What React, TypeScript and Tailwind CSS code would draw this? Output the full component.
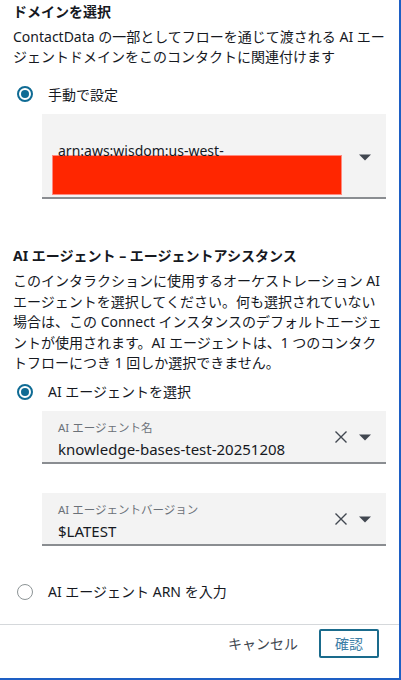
import React from "react";

const font = { fontFamily: '"Noto Sans", "Noto Sans CJK JP", sans-serif' };

function Radio({ checked, label }: { checked?: boolean; label: string }) {
  return (
    <div className="flex h-5 items-center">
      <span
        className={
          "ml-[4px] flex h-4 w-4 items-center justify-center rounded-full border-2 " +
          (checked ? "border-[#0f6b94]" : "border-[#8d9496] border-[1.5px]")
        }
      >
        {checked && <span className="h-[8px] w-[8px] rounded-full bg-[#0f6b94]" />}
      </span>
      <span className="ml-[15px] text-[14px] text-[#16191f]">{label}</span>
    </div>
  );
}

function Caret() {
  return (
    <svg width="12" height="8" viewBox="0 0 12 8" className="text-[#414750]">
      <path d="M0 1.5h12L6 7.5z" fill="currentColor" />
    </svg>
  );
}

function Clear() {
  return (
    <svg width="14" height="14" viewBox="0 0 14 14">
      <path d="M1.5 1.5l11 11M12.5 1.5l-11 11" stroke="#414750" strokeWidth="1.4" />
    </svg>
  );
}

function AgentSelect({ label, value }: { label: string; value: string }) {
  return (
    <div className="ml-[29px] flex h-[53px] w-[344px] items-center border-b-2 border-[#8a8d91] bg-[#f3f3f3] pl-[16px] pr-[15px]">
      <div className="flex-1 self-start pt-[9px]">
        <div className="text-[11.5px] leading-4 text-[#6b7178]">{label}</div>
        <div className="mt-[3px] text-[15px] leading-5 text-[#16191f]">{value}</div>
      </div>
      <div className="flex items-center gap-[11px] pt-[2px]">
        <Clear />
        <Caret />
      </div>
    </div>
  );
}

export default function App() {
  return (
    <div
      className="relative flex h-[680px] w-[401px] flex-col border-b-2 border-r-2 border-[#1e5fc4] bg-white text-[#16191f]"
      style={font}
    >
      <div className="px-[13px] pt-[2px]">
        <h2 className="text-[14px] font-bold leading-5">ドメインを選択</h2>
        <p className="mt-[5px] text-[14px] leading-5">
          ContactData の一部としてフローを通じて渡される AI エージェントドメインをこのコンタクトに関連付けます
        </p>
        <div className="mt-[17px]">
          <Radio checked label="手動で設定" />
        </div>
        <div className="ml-[29px] mt-[10px] flex h-[85px] w-[344px] items-start border-b-2 border-[#8a8d91] bg-[#f3f3f3] pl-[10px] pr-[15px]">
          <div className="flex-1 pt-[27px]">
            <div className="pl-[6px] text-[14px] leading-5">arn:aws:wisdom:us-west-</div>
            <div className="-mt-[6px] h-[40px] w-[290px] border border-[#ff8a80] bg-[#ff2600]" />
          </div>
          <div className="pt-[39px]">
            <Caret />
          </div>
        </div>

        <h2 className="mt-[47px] text-[14px] font-bold leading-5">
          AI エージェント – エージェントアシスタンス
        </h2>
        <p className="mt-[5px] text-[14px] leading-[20.5px]">
          このインタラクションに使用するオーケストレーション AI エージェントを選択してください。何も選択されていない場合は、この Connect インスタンスのデフォルトエージェントが使用されます。AI エージェントは、1 つのコンタクトフローにつき 1 回しか選択できません。
        </p>
        <div className="mt-[8px]">
          <Radio checked label="AI エージェントを選択" />
        </div>
        <div className="mt-[9px]">
          <AgentSelect label="AI エージェント名" value="knowledge-bases-test-20251208" />
        </div>
        <div className="mt-[29px]">
          <AgentSelect label="AI エージェントバージョン" value="$LATEST" />
        </div>
        <div className="mt-[36px]">
          <Radio label="AI エージェント ARN を入力" />
        </div>
      </div>

      <div className="mt-[22px] border-t border-[#d5d8db]" />
      <div className="flex items-center justify-end pr-[20px] pt-[4px]">
        <button className="text-[14px] text-[#414750]">キャンセル</button>
        <button className="ml-[21px] h-[29px] w-[60px] rounded-[2px] border-2 border-[#1a6b8c] text-[14px] text-[#3d7ea6]">
          確認
        </button>
      </div>
    </div>
  );
}
